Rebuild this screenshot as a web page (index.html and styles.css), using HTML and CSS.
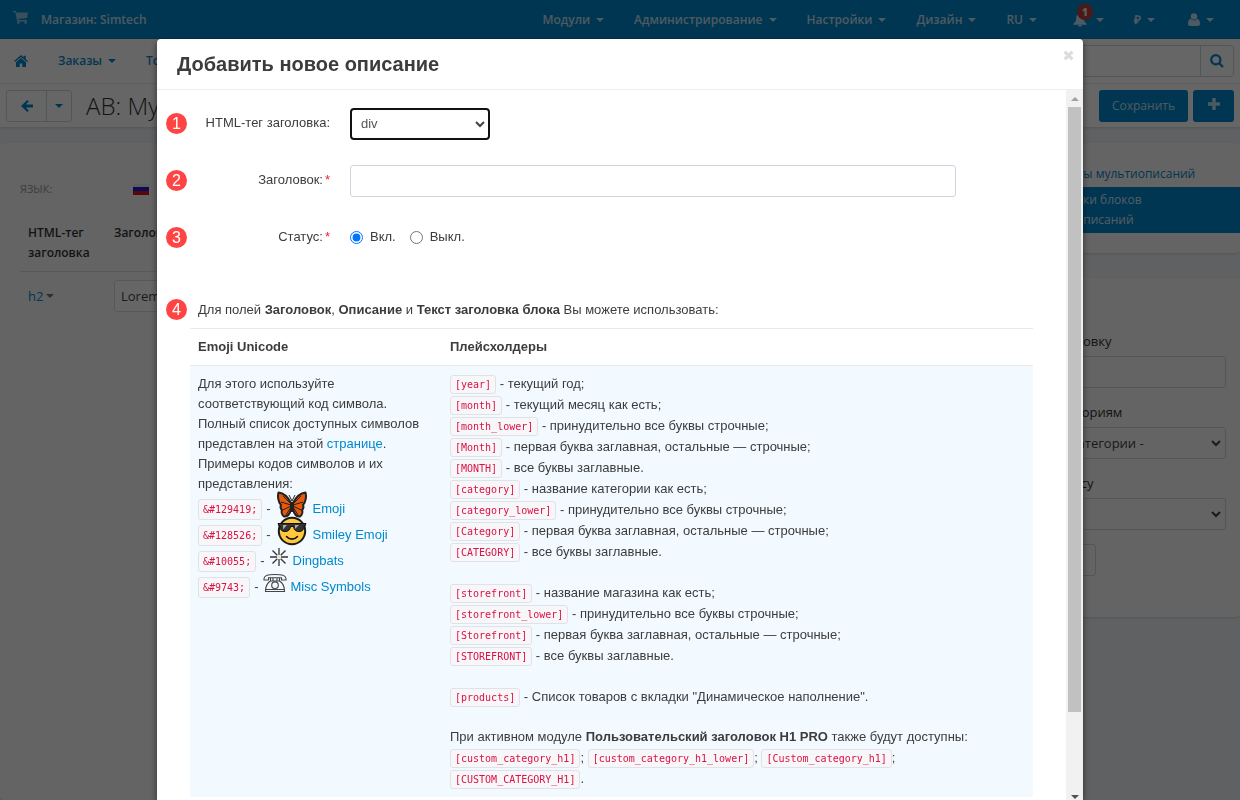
FILE: index.html
```
<!DOCTYPE html>
<html lang="ru">
<head>
<meta charset="utf-8">
<title>Добавить новое описание</title>
<link rel="stylesheet" href="styles.css">
</head>
<body>
<div class="page">
  <header class="navbar">
    <svg class="cart" viewBox="0 0 16 14" width="16" height="14"><path d="M0 1h2.8l.5 1.5H15l-1 5.5-9 1 .4 1H14v1.4H4.2L2.3 2.3H0z"/><circle cx="5.4" cy="12.6" r="1.3"/><circle cx="12.6" cy="12.6" r="1.3"/></svg>
    <a class="store" href="#">Магазин: Simtech</a>
    <nav class="nav-items">
      <a class="nav-item" href="#">Модули <i class="caret"></i></a>
      <a class="nav-item" href="#">Администрирование <i class="caret"></i></a>
      <a class="nav-item" href="#">Настройки <i class="caret"></i></a>
      <a class="nav-item" href="#">Дизайн <i class="caret"></i></a>
      <a class="nav-item nav-lang" href="#">RU <i class="caret"></i></a>
      <a class="nav-item nav-bell" href="#" aria-label="Уведомления">
        <svg viewBox="0 0 14 14" width="16" height="14"><path d="M7 .5c2.400.5 3.800 2 3.800 4.600 0 3 .9 4.300 2.900 5.700v1H.3v-1c2-1.400 2.900-2.700 2.900-5.700C3.200 2.500 4.600 1 7 .5zM5.300 12h3.400c0 1-.7 1.700-1.700 1.700S5.300 13 5.300 12z"/></svg>
        <b class="badge">1</b><i class="caret"></i></a>
      <a class="nav-item nav-cur" href="#">₽ <i class="caret"></i></a>
      <a class="nav-item" href="#" aria-label="Профиль">
        <svg viewBox="0 0 12 13" width="12" height="13"><circle cx="6" cy="3.400" r="3.200"/><path d="M2.800 5.800C1 6.300 0 8 0 10.800 0 12.300.8 13 2 13h8c1.200 0 2-.7 2-2.200 0-2.800-1-4.500-2.800-5C8 7.800 4 7.800 2.800 5.800z"/></svg>
        <i class="caret"></i></a>
    </nav>
  </header>
  <div class="subnav">
    <a href="#" aria-label="Главная"><svg class="home" viewBox="0 0 14 12" width="14" height="12"><path d="M7 0l2.700 2.300V.7h2v3.300L14 6l-.9 1L7 1.900.9 7 0 6z"/><path d="M7 3l5 4.200V12H8.300V8.500H5.700V12H2V7.200z"/></svg></a>
    <a class="sub-item" href="#">Заказы <i class="caret"></i></a>
    <a class="sub-item" href="#">Товары <i class="caret"></i></a>
    <div class="search">
      <input class="search-input" type="text" aria-label="Поиск">
      <button class="search-btn" type="button" aria-label="Найти"><svg viewBox="0 0 14 14" width="14" height="14"><circle cx="5.800" cy="5.800" r="4.600" fill="none" stroke="currentColor" stroke-width="2.200"/><path d="M8.600 10.200l1.600-1.600 3.600 3.600-1.600 1.600z"/></svg></button>
    </div>
  </div>
  <div class="actions">
    <div class="btn-group">
      <button class="btn back" type="button" aria-label="Назад"><svg viewBox="0 0 12 12" width="12" height="12"><path d="M6.300 0l1.500 1.500-2.900 3H12v3H4.900l2.900 3L6.300 12 0 6z"/></svg></button>
      <button class="btn drop" type="button" aria-label="Ещё"><i class="caret"></i></button>
    </div>
    <h1 class="page-title">АВ: Мультиописания</h1>
    <button class="btn-primary" type="button">Сохранить</button>
    <button class="btn-primary plus" type="button" aria-label="Добавить"><svg viewBox="0 0 12 12" width="12" height="12"><path d="M4.300 0h3.400v4.300H12v3.400H7.700V12H4.300V7.700H0V4.300h4.300z"/></svg></button>
  </div>
  <div class="columns">
    <main class="panel main">
      <div class="lang"><span class="lang-label">ЯЗЫК:</span>
        <svg viewBox="0 0 16 11" width="16" height="11"><path fill="#eee" d="M0 0h16v4H0z"/><path fill="#1c1ce0" d="M0 3h16v5H0z"/><path fill="#e01010" d="M0 7h16v4H0z"/></svg></div>
      <table class="list">
        <thead><tr><th class="col-tag">HTML-тег заголовка</th><th>Заголовок</th></tr></thead>
        <tbody><tr><td><a class="tag" href="#">h2<i class="caret"></i></a></td><td><input class="field" type="text" value="Lorem ipsum" aria-label="Заголовок блока"></td></tr></tbody>
      </table>
    </main>
    <aside class="sidebar">
      <nav class="panel menu">
        <a class="menu-item" href="#">Варианты мультиописаний</a>
        <a class="menu-item active" href="#">Настройки блоков<br>мультиописаний</a>
      </nav>
      <form class="panel filter">
        <label for="f-title">По заголовку</label>
        <input class="field" id="f-title" type="text">
        <label for="f-cat">По категориям</label>
        <span class="select-wrap"><select class="field" id="f-cat"><option>- Все категории -</option></select><svg class="chev" viewBox="0 0 10 7" width="10" height="7"><path d="M1 1l4 4 4-4"/></svg></span>
        <label for="f-status">По статусу</label>
        <span class="select-wrap"><select class="field" id="f-status"><option></option></select><svg class="chev" viewBox="0 0 10 7" width="10" height="7"><path d="M1 1l4 4 4-4"/></svg></span>
        <button class="field find" type="button">Найти</button>
      </form>
    </aside>
  </div>
</div>

<div class="backdrop">
  <section class="modal" role="dialog" aria-labelledby="m-title">
    <header class="modal-head">
      <h2 id="m-title">Добавить новое описание</h2>
      <button class="close" type="button" aria-label="Закрыть"><svg viewBox="0 0 10 10" width="11" height="11"><path d="M1.500 1.500l7 7M8.500 1.500l-7 7"/></svg></button>
    </header>
    <div class="modal-main">
      <div class="modal-body">
        <div class="row"><span class="num">1</span><label class="label" for="tag">HTML-тег заголовка:</label>
          <span class="select-wrap tag-wrap"><select class="tag-select" id="tag"><option>div</option></select><svg class="chev" viewBox="0 0 10 7" width="10" height="7"><path d="M1 1l4 4 4-4"/></svg></span></div>
        <div class="row"><span class="num">2</span><label class="label" for="title">Заголовок:<em>*</em></label>
          <input class="title-input" id="title" type="text"></div>
        <div class="row"><span class="num">3</span><span class="label">Статус:<em>*</em></span>
          <div class="radios"><label><input type="radio" name="st" checked>Вкл.</label><label><input type="radio" name="st">Выкл.</label></div></div>
        <div class="row note"><span class="num">4</span><p>Для полей <b>Заголовок</b>, <b>Описание</b> и <b>Текст заголовка блока</b> Вы можете использовать:</p></div>
        <table class="help">
          <thead><tr><th class="col-emoji">Emoji Unicode</th><th>Плейсхолдеры</th></tr></thead>
          <tbody><tr>
            <td>
              <p>Для этого используйте<br>соответствующий код символа.<br>Полный список доступных символов<br>представлен на этой <a href="#">странице</a>.<br>Примеры кодов символов и их<br>представления:</p>
              <ul class="emoji">
                <li><code>&amp;#129419;</code><span>-</span>
                  <svg class="big" viewBox="0 0 30 30" width="30" height="30"><g stroke="#222" stroke-width="2" stroke-linejoin="round"><path fill="#e8590c" d="M14 13C11 7 6 3 1.500 2.500.5 6 1 12 4 15c-1 2 0 4 1 5-1 2 0 5 2 6.500 4 .5 6-3 7-7.500z"/><path fill="#e8590c" d="M16 13c3-6 8-10 12.500-10.500C29.500 6 29 12 26 15c1 2 0 4-1 5 1 2 0 5-2 6.500-4 .5-6-3-7-7.500z"/><path fill="none" stroke-width="1" d="M14 14L6 6M14 15L4 12M14 16l-8 4M14 17l-5 8M16 14l8-8M16 15l10-3M16 16l8 4M16 17l5 8M12 5l3 6 3-6"/><path stroke-width="3" d="M15 12v10"/></g></svg>
                  <a href="#">Emoji</a></li>
                <li><code>&amp;#128526;</code><span>-</span>
                  <svg class="big" viewBox="0 0 30 30" width="30" height="30"><circle cx="15" cy="15" r="13.200" fill="#ffc83d" stroke="#1b1b1b" stroke-width="2"/><path fill="#333" stroke="#111" d="M1 7.500h28l-1 2.500h-1c0 4-2 5.500-5 5.500-3.500 0-5-2-5.500-5h-3c-.5 3-2 5-5.500 5-3 0-5-1.500-5-5.500H2z"/><path fill="#aaa" d="M6 9h4l-4 4.500zM18 9h4l-4 4z"/><path fill="none" stroke="#111" stroke-width="1.600" stroke-linecap="round" d="M9.500 20.500c2.800 3.500 8.200 3.500 11 0"/></svg>
                  <a href="#">Smiley Emoji</a></li>
                <li><code>&amp;#10055;</code><span>-</span>
                  <svg class="small" viewBox="0 0 20 20" width="20" height="20"><path fill="none" stroke="#333" stroke-width="1.300" d="M10 1v7M10 12v7M1 10h7M12 10h7M3.500 3.500l4.800 4.800M11.700 11.700l4.800 4.800M3.500 16.500l4.800-4.800M11.700 8.300l4.800-4.800"/><circle cx="10" cy="10" r="1.600" fill="#e8dcc8"/></svg>
                  <a href="#">Dingbats</a></li>
                <li><code>&amp;#9743;</code><span>-</span>
                  <svg class="small" viewBox="0 0 24 20" width="24" height="20"><g fill="none" stroke="#444" stroke-width="1.100"><path d="M1 5.500C1.500 2 5 1.500 12 1.500S22.500 2 23 5.500V7h-4.500V4.700h-13V7H1z"/><path d="M7.500 4.700V8C4 10 2.500 13 2.500 18.500h19C21.500 13 20 10 16.500 8V4.700M10 4.700V8M14 4.700V8M7.500 8h9M2.500 16.500h19"/><circle cx="12" cy="12.200" r="3.300"/></g></svg>
                  <a href="#">Misc Symbols</a></li>
              </ul>
            </td>
            <td class="places">
              <ul class="ph">
                <li><code>[year]</code> - текущий год;</li>
                <li><code>[month]</code> - текущий месяц как есть;</li>
                <li><code>[month_lower]</code> - принудительно все буквы строчные;</li>
                <li><code>[Month]</code> - первая буква заглавная, остальные — строчные;</li>
                <li><code>[MONTH]</code> - все буквы заглавные.</li>
                <li><code>[category]</code> - название категории как есть;</li>
                <li><code>[category_lower]</code> - принудительно все буквы строчные;</li>
                <li><code>[Category]</code> - первая буква заглавная, остальные — строчные;</li>
                <li><code>[CATEGORY]</code> - все буквы заглавные.</li>
              </ul>
              <ul class="ph">
                <li><code>[storefront]</code> - название магазина как есть;</li>
                <li><code>[storefront_lower]</code> - принудительно все буквы строчные;</li>
                <li><code>[Storefront]</code> - первая буква заглавная, остальные — строчные;</li>
                <li><code>[STOREFRONT]</code> - все буквы заглавные.</li>
              </ul>
              <ul class="ph">
                <li><code>[products]</code> - Список товаров с вкладки "Динамическое наполнение".</li>
              </ul>
              <p>При активном модуле <b>Пользовательский заголовок H1 PRO</b> также будут доступны:</p>
              <p class="codes"><code>[custom_category_h1]</code>; <code>[custom_category_h1_lower]</code>; <code>[Custom_category_h1]</code>;<br><code>[CUSTOM_CATEGORY_H1]</code>.</p>
            </td>
          </tr></tbody>
        </table>
      </div>
      <div class="scrollbar" aria-hidden="true"><i class="arrow up"></i><div class="track"><div class="thumb"></div></div><i class="arrow down"></i></div>
    </div>
  </section>
</div>
</body>
</html>
```
FILE: styles.css
```
* { box-sizing: border-box; }
html, body { height: 100%; margin: 0; overflow: hidden; }
body { font: 13px/20px "Open Sans", sans-serif; color: #333; background: #eff3f8; }
a { color: #0388cc; text-decoration: none; }
h1, h2, p, ul { margin: 0; padding: 0; }
ul { list-style: none; }
svg { flex: none; fill: currentColor; }
button, input, select { font: inherit; color: inherit; margin: 0; }
.caret { display: inline-block; border: 4px solid transparent; border-top-color: currentColor; border-bottom: 0; }

.page { min-height: 100%; }
.navbar { display: flex; align-items: center; height: 39px; padding: 1px 11px 0 13px; background: #0388cc; color: #ffffffc0; border-bottom: 1px solid #0379b5; font-size: 12px; font-weight: 600; }
.navbar a { color: inherit; }
.cart { margin-bottom: 5px; opacity: .7; }
.store { margin-left: 12px; }
.nav-items { display: flex; margin-left: auto; }
.nav-item { display: flex; align-items: center; gap: 6px; padding: 0 15px; white-space: nowrap; }
.nav-lang { padding-right: 18px; }
.nav-bell { position: relative; gap: 8px; padding-left: 17px; }
.badge { position: absolute; left: 22px; top: -6px; width: 16px; height: 16px; border-radius: 8px; background: #b9403c; color: #eee; font-size: 10px; line-height: 16px; text-align: center; }
.nav-cur { padding-right: 18px; }

.subnav { display: flex; align-items: center; height: 45px; padding: 0 6px 0 14px; background: #fff; border-bottom: 1px solid #f0f0f0; color: #0388cc; }
.home { display: block; }
.sub-item { display: flex; align-items: center; gap: 6px; margin-left: 30px; font-size: 12px; font-weight: 600; }
.search { display: flex; width: 300px; height: 32px; margin-left: auto; border: 1px solid #d0d7dd; border-radius: 3px; }
.search-input { flex: 1; min-width: 0; border: 0; background: none; }
.search-btn { width: 33px; padding: 3px 0 0; border: 0; border-left: 1px solid #d0d7dd; background: none; color: #0388cc; }

.actions { display: flex; align-items: center; gap: 5px; height: 43px; padding: 0 6px; background: #fff; box-shadow: 0 1px 3px #0002; }
.btn-group { display: flex; height: 32px; border: 1px solid #d0d7dd; border-radius: 3px; color: #0388cc; }
.btn { display: flex; align-items: center; justify-content: center; width: 39px; padding: 0; border: 0; background: none; }
.drop { width: 25px; border-left: 1px solid #d0d7dd; }
.page-title { flex: 1; margin-left: 9px; font-size: 24px; line-height: 32px; font-weight: 300; }
.btn-primary { height: 32px; padding: 0 13px; border: 0; border-radius: 3px; background: #0388cc; color: #ffffffc0; font-size: 12px; }
.plus { width: 41px; }

.columns { display: flex; align-items: flex-start; gap: 15px; padding-top: 16px; }
.panel { background: #fafafa; border-radius: 4px; box-shadow: 0 1px 3px #0002; }
.main { flex: 1; min-width: 0; min-height: calc(100vh - 143px); padding: 36px 20px; }
.lang { display: flex; align-items: center; gap: 81px; color: #999; font-size: 11px; }
.list { width: 100%; margin-top: 16px; border-collapse: collapse; }
.list th { padding: 8px; border-bottom: 1px solid #ddd; text-align: left; vertical-align: top; font-size: 12px; font-weight: 600; }
.list td { padding: 8px; }
.list .col-tag { width: 86px; }
.tag { display: flex; align-items: center; gap: 3px; }
.tag .caret { color: #777; }
.field { display: block; width: 100%; height: 32px; padding: 0 6px; border: 1px solid #d8dcdf; border-radius: 3px; background: #fff; color: #444; }
.sidebar { display: flex; flex-direction: column; gap: 25px; width: 226px; }
.menu { padding: 18px 0 20px; }
.menu-item { display: block; padding: 3px 20px; font-size: 12px; }
.menu-item.active { background: #0388cc; color: #ffffffd0; }
.filter { padding: 53px 14px 41px; }
.filter label { display: block; margin-bottom: 5px; }
.filter .field { margin-bottom: 14px; background: #fafafa; border-color: #d0d4d8; }
.filter .find { width: 68px; margin: 0; }
.select-wrap { position: relative; display: block; }
.select-wrap select { appearance: none; padding: 0 9px; outline: 0; }
.chev { position: absolute; right: 5px; top: 13px; fill: none; stroke: #444; stroke-width: 2; }

.backdrop { position: fixed; inset: 0; padding: 39px 157px 0; background: rgba(0, 0, 0, .6); overflow: hidden; }
.modal { display: flex; flex-direction: column; height: 100%; background: #fff; border-radius: 4px 4px 0 0; box-shadow: 0 3px 7px #0008; color: #3c3c3c; font-family: "Liberation Sans", Arial, sans-serif; }
.modal-head { display: flex; align-items: center; justify-content: space-between; flex: none; height: 51px; padding: 0 9px 0 20px; border-bottom: 1px solid #eee; }
.modal-head h2 { font-size: 20px; line-height: 24px; }
.close { padding: 0 0 18px; border: 0; background: none; line-height: 0; }
.close path { stroke: #ddd; stroke-width: 3; }
.modal-main { display: flex; flex: 1; min-height: 0; }
.modal-body { flex: 1; min-width: 0; padding: 18px 33px 0 9px; overflow: hidden; }
.row { display: flex; align-items: center; min-height: 32px; margin-bottom: 25px; }
.num { flex: none; width: 21px; height: 21px; margin-bottom: 2px; border-radius: 50%; background: #ff4444; color: #fff; font-size: 16px; line-height: 21px; text-align: center; }
.label { flex: none; width: 143px; margin: 0 20px 2px 0; text-align: right; }
.label em { margin-left: 2px; color: #f02040; font-style: normal; }
.tag-wrap { width: 140px; }
.tag-select { width: 100%; height: 32px; border: 2px solid #111; border-radius: 4px; background: #fff; color: #555; }
.title-input { flex: 1; height: 32px; margin-right: 77px; border: 1px solid #cdd6df; border-radius: 3px; }
.radios { display: flex; gap: 14px; margin-bottom: 2px; }
.radios label { display: flex; align-items: center; gap: 7px; }
.radios input { width: 13px; height: 13px; accent-color: #0075ff; }
.note { gap: 11px; min-height: 20px; margin: 45px 0 8px; }
.note .num { margin: 0; }
.help { width: calc(100% - 24px); margin-left: 24px; border-collapse: collapse; }
.help th { padding: 8px; border-top: 1px solid #eaeaea; border-bottom: 1px solid #eaeaea; text-align: left; }
.help .col-emoji { width: 252px; }
.help td { padding: 8px; background: #f2faff; vertical-align: top; }
.help .places { padding-top: 7px; }
code { padding: 3px 4px; border: 1px solid #e1e1e8; border-radius: 3px; background: #f7f7f9; color: #dd1144; font: 10px/13px "DejaVu Sans Mono", monospace; white-space: nowrap; }
.ph { margin-bottom: 20px; line-height: 21px; }
.codes { line-height: 21px; }
.emoji { padding-top: 2px; }
.emoji li { display: flex; align-items: center; gap: 4px; height: 26px; }
.emoji svg { margin: 0 0 9px; }
.emoji .big { margin: 0 2px 9px; }
.scrollbar { display: flex; flex-direction: column; align-items: center; flex: none; width: 17px; background: #f1f1f1; }
.arrow { flex: none; border: 4px solid transparent; }
.up { margin: 3px 0 6px; border-bottom-color: #a0a0a0; }
.down { margin-bottom: -3px; border-top-color: #505050; }
.track { flex: 1; width: 13px; }
.thumb { height: 88%; background: #c1c1c1; }
```
